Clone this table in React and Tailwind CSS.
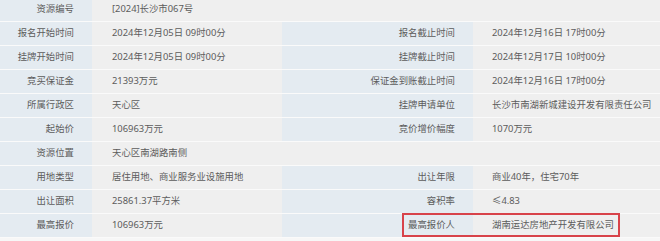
const rows = [
  ['资源编号', '[2024]长沙市067号'],
  ['报名开始时间', '2024年12月05日 09时00分', '报名截止时间', '2024年12月16日 17时00分'],
  ['挂牌开始时间', '2024年12月05日 09时00分', '挂牌截止时间', '2024年12月17日 10时00分'],
  ['竞买保证金', '21393万元', '保证金到账截止时间', '2024年12月16日 17时00分'],
  ['所属行政区', '天心区', '挂牌申请单位', '长沙市南湖新城建设开发有限责任公司'],
  ['起始价', '106963万元', '竞价增价幅度', '1070万元'],
  ['资源位置', '天心区南湖路南侧'],
  ['用地类型', '居住用地、商业服务业设施用地', '出让年限', '商业40年，住宅70年'],
  ['出让面积', '25861.37平方米', '容积率', '≤4.83'],
  ['最高报价', '106963万元', '最高报价人', '湖南运达房地产开发有限公司'],
]

function Row({ cells, highlight }) {
  const [label, value, label2, value2] = cells
  const wide = label2 === undefined
  return (
    <div className="relative grid h-6 grid-cols-[92px_190px_191px_1fr] border-b border-[#fafafa]">
      <div className="flex items-center justify-end bg-[#e4ebf1] pr-[18px]">{label}</div>
      {wide ? (
        <div className="col-span-3 flex items-center bg-[#efefef] pl-5">{value}</div>
      ) : (
        <>
          <div className="flex items-center bg-[#efefef] pl-5">{value}</div>
          <div className="flex items-center justify-end bg-[#e4ebf1] pr-[18px]">{label2}</div>
          <div className="flex items-center bg-[#efefef] pl-[19px]">{value2}</div>
        </>
      )}
      {highlight && <div className="absolute left-[402px] top-[-1px] h-[24px] w-[218px] border-2 border-[#d8434a]" />}
    </div>
  )
}

export default function App() {
  return (
    <div className="h-[241px] w-[660px] overflow-hidden bg-[#f7f7f7] font-['Noto_Sans','Noto_Sans_CJK_SC',sans-serif] text-[9.4px] text-[#5c5c5c]">
      <div className="-mt-[2px]">
        {rows.map((cells, i) => <Row key={cells[0]} cells={cells} highlight={i === rows.length - 1} />)}
      </div>
    </div>
  )
}
